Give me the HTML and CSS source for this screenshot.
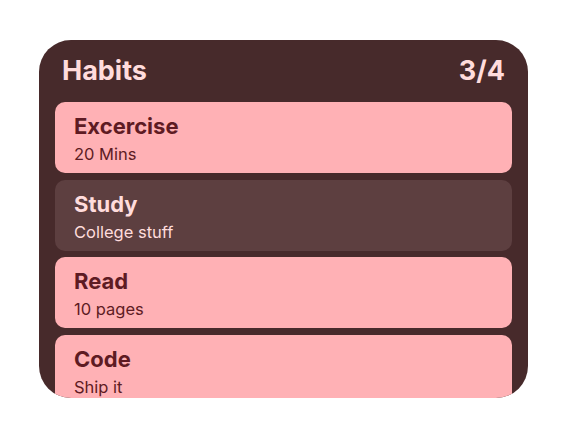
FILE: index.html
```html
<!DOCTYPE html>
<html lang="en">
<head>
	<meta charset="UTF-8">
	<meta name="viewport" content="width=device-width, initial-scale=1.0">
	<title>Habits</title>
	<link rel="stylesheet" href="styles.css">
</head>
<body>
	<div class="widget">
		<header class="widget-header">
			<span class="title">Habits</span>
			<span class="count">3/4</span>
		</header>
		<section class="habit-list">
			<div class="habit done">
				<span class="name">Excercise</span>
				<span class="note">20 Mins</span>
			</div>
			<div class="habit">
				<span class="name">Study</span>
				<span class="note">College stuff</span>
			</div>
			<div class="habit done">
				<span class="name">Read</span>
				<span class="note">10 pages</span>
			</div>
			<div class="habit done">
				<span class="name">Code</span>
				<span class="note">Ship it</span>
			</div>
		</section>
	</div>
</body>
</html>
```

FILE: styles.css
```css
*{
	margin: 0;
	padding: 0;
	box-sizing: border-box;
	font-family: Inter, "Noto Sans", sans-serif;
}

body{
	background-color: #fff;
	padding: 40px 0 0 39px;
}

.widget{
	width: 489px;
	height: 358px;
	background-color: #472a2b;
	border-radius: 32px;
	overflow: hidden;
	padding: 0 16px;
}

.widget-header{
	display: flex;
	justify-content: space-between;
	align-items: center;
	padding: 15px 7px 15px 7px;
	line-height: 32px;
	font-size: 27px;
	font-weight: 700;
	color: #ffdcdc;
}

.habit-list{
	display: flex;
	flex-direction: column;
	gap: 6.5px;
}

.habit{
	display: flex;
	flex-direction: column;
	flex-shrink: 0;
	height: 71px;
	padding: 10px 19px 9px;
	border-radius: 10px;
	background-color: #5d3f40;
	color: #ffdcdc;
}

.habit.done{
	background-color: #ffb1b5;
	color: #5e1b23;
}

.habit .name{
	font-size: 22px;
	font-weight: 700;
	line-height: 28px;
}

.habit .note{
	font-size: 16.5px;
	line-height: 20px;
	margin-top: 4px;
}
```
